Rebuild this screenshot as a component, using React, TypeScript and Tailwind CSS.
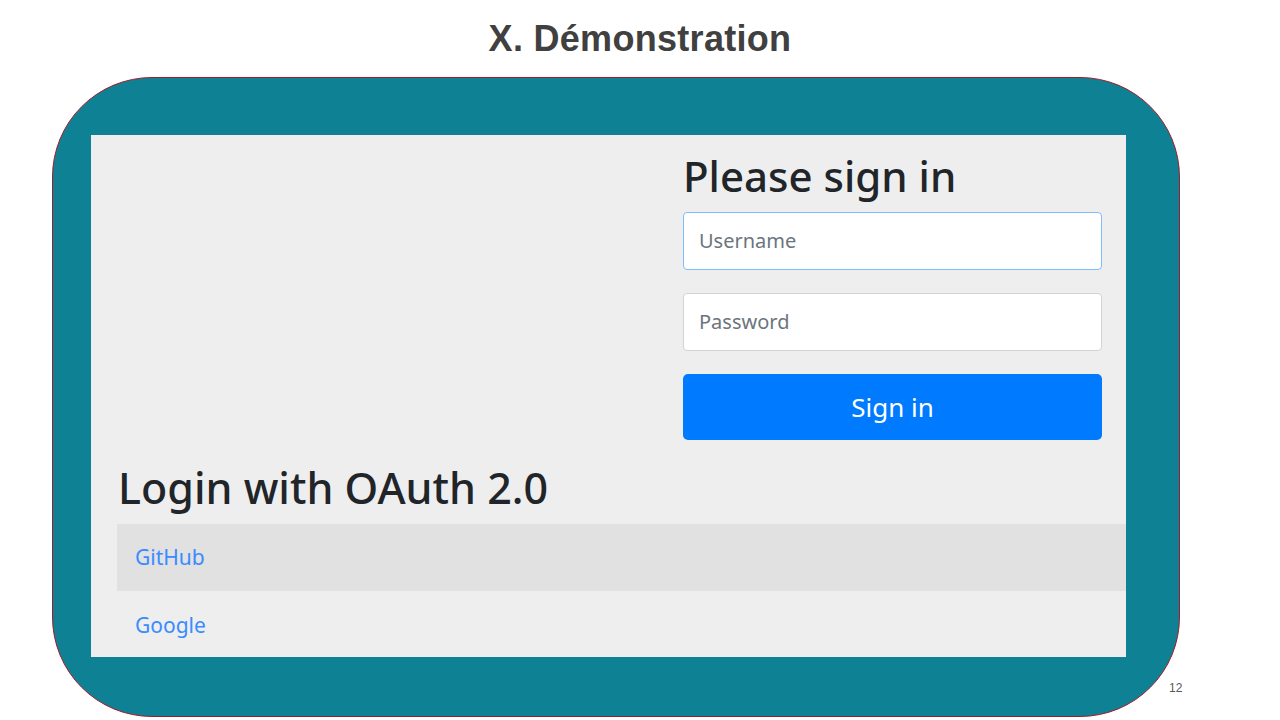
export default function App() {
  return (
    <div className="relative w-[1280px] h-[720px] bg-white overflow-hidden">
      {/* slide title */}
      <div className="h-[77px] flex items-center justify-center">
        <h1 className="text-[36px] font-bold text-[#404040] tracking-[0.3px] font-['Liberation_Sans',Arial,sans-serif]">
          X. Démonstration
        </h1>
      </div>

      {/* teal frame with screenshot */}
      <div className="ml-[52px] w-[1128px] h-[640px] rounded-[100px] bg-[#0e8294] border border-[#a01c2c] pt-[57px] pl-[38px] pr-[53px] pb-[59px]">
        <div className="h-full bg-[#eeeeee] overflow-hidden font-['Noto_Sans',sans-serif] text-[#212529]">
          <div className="ml-[592px] w-[419px] pt-[15px]">
            <h2 className="text-[42px] leading-[52px] font-medium">Please sign in</h2>
            <div className="mt-[10px] h-[58px] bg-white border border-[#80bdff] rounded-[4px] flex items-center px-[15px]">
              <span className="text-[20px] text-[#6c757d]">Username</span>
            </div>
            <div className="mt-[23px] h-[58px] bg-white border border-[#cfd4d8] rounded-[4px] flex items-center px-[15px]">
              <span className="text-[20px] text-[#6c757d]">Password</span>
            </div>
            <button className="mt-[23px] w-full h-[66px] bg-[#007bff] rounded-[5px] text-white text-[26px] flex items-center justify-center">
              Sign in
            </button>
          </div>

          <div className="pl-[26px] pt-[22px]">
            <h2 className="text-[43px] leading-[52px] font-medium pl-[1px]">Login with OAuth 2.0</h2>
            <div className="mt-[10px]">
              <div className="h-[67px] bg-[#e1e1e1] flex items-center px-[18px]">
                <span className="text-[21px] text-[#3a8bff]">GitHub</span>
              </div>
              <div className="h-[67px] flex items-center px-[18px] pt-[2px]">
                <span className="text-[21px] text-[#3a8bff]">Google</span>
              </div>
            </div>
          </div>
        </div>
      </div>

      <span className="absolute left-[1169px] top-[679px] text-[12px] text-[#595959] font-['Liberation_Sans',Arial,sans-serif]">
        12
      </span>
    </div>
  );
}
